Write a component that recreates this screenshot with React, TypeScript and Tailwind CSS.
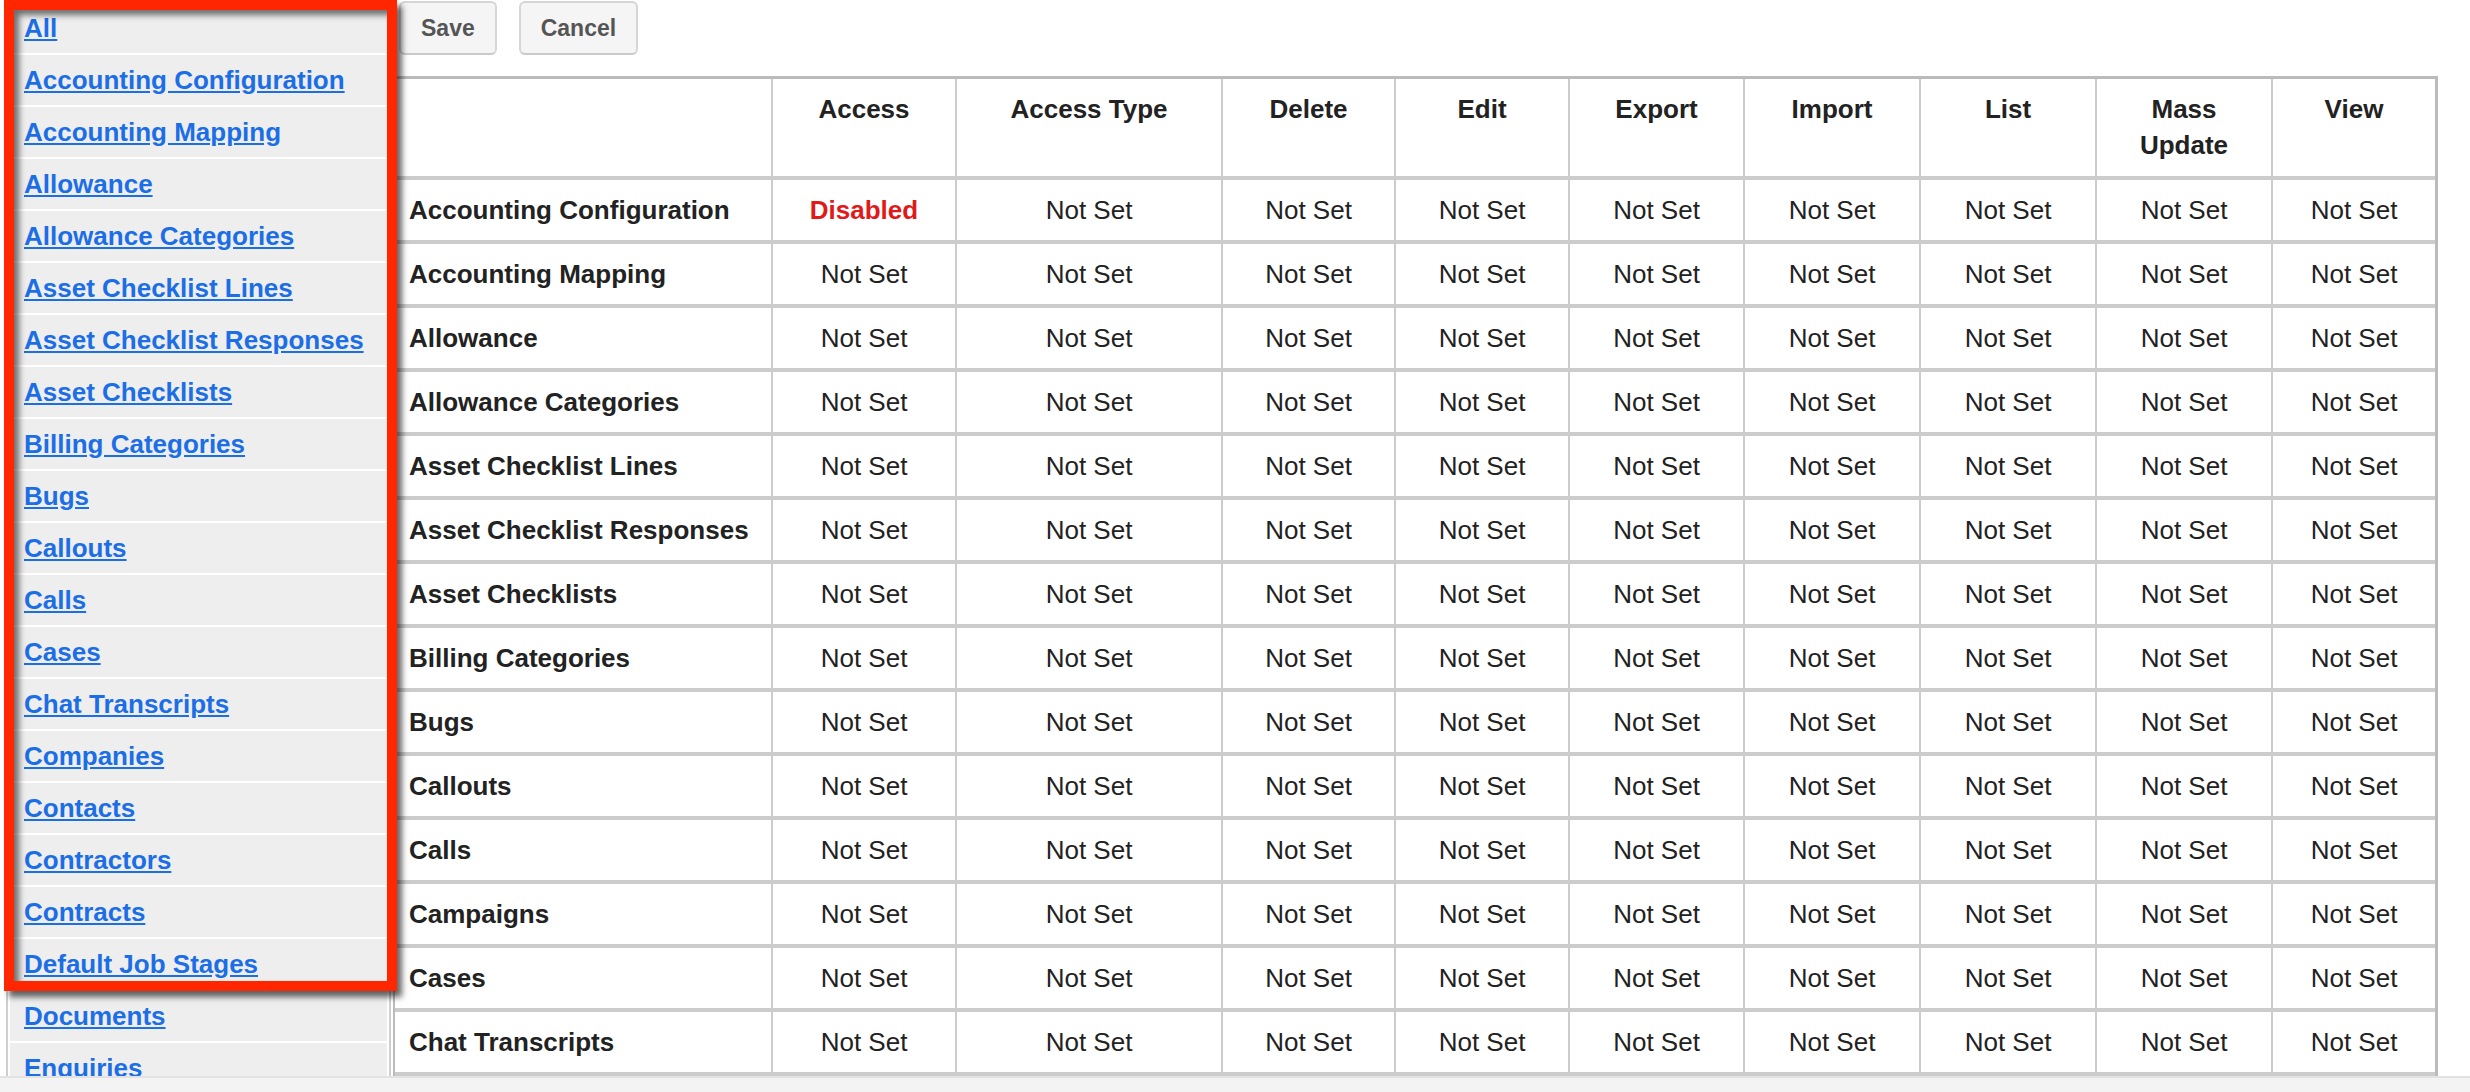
import React from "react";

const modules = [
  "All",
  "Accounting Configuration",
  "Accounting Mapping",
  "Allowance",
  "Allowance Categories",
  "Asset Checklist Lines",
  "Asset Checklist Responses",
  "Asset Checklists",
  "Billing Categories",
  "Bugs",
  "Callouts",
  "Calls",
  "Cases",
  "Chat Transcripts",
  "Companies",
  "Contacts",
  "Contractors",
  "Contracts",
  "Default Job Stages",
  "Documents",
  "Enquiries",
];

const rows = [
  "Accounting Configuration",
  "Accounting Mapping",
  "Allowance",
  "Allowance Categories",
  "Asset Checklist Lines",
  "Asset Checklist Responses",
  "Asset Checklists",
  "Billing Categories",
  "Bugs",
  "Callouts",
  "Calls",
  "Campaigns",
  "Cases",
  "Chat Transcripts",
];

// header label + column width in px
const columns: { label: string; width: string }[] = [
  { label: "Access", width: "w-[184px]" },
  { label: "Access Type", width: "w-[266px]" },
  { label: "Delete", width: "w-[173px]" },
  { label: "Edit", width: "w-[174px]" },
  { label: "Export", width: "w-[175px]" },
  { label: "Import", width: "w-[176px]" },
  { label: "List", width: "w-[176px]" },
  { label: "Mass Update", width: "w-[176px]" },
  { label: "View", width: "w-[164px]" },
];

const Sidebar = () => (
  <div className="ml-[6px] w-[385px] shrink-0 border-x-2 border-[#cfcfcf] bg-white px-[2px] pt-[3px]">
    {modules.map((name) => (
      <div key={name} className="mb-[2px] flex h-[50px] items-center bg-[#eeeeee] pl-[14px]">
        <a href="#" className="text-[26px] font-bold text-[#1c6ee6] underline">
          {name}
        </a>
      </div>
    ))}
  </div>
);

const Toolbar = () => (
  <div className="flex gap-[22px] pl-[6px] pt-[1px]">
    {["Save", "Cancel"].map((label) => (
      <button
        key={label}
        className="h-[54px] rounded-[6px] border-2 border-[#d6d6d6] border-b-[#cacaca] bg-[#f5f5f5] px-[20px] text-[23px] font-bold text-[#555555]"
      >
        {label}
      </button>
    ))}
  </div>
);

const RolesTable = () => (
  <table className="mt-[21px] w-[2040px] table-fixed border-separate border-spacing-0 border-l-2 border-r-[3px] border-t-[3px] border-[#bbbbbb] text-[#222222]">
    <colgroup>
      <col className="w-[376px]" />
      {columns.map((c) => (
        <col key={c.label} className={c.width} />
      ))}
    </colgroup>
    <thead>
      <tr>
        <th className="border-b-4 border-[#cccccc] p-0">
          <div className="h-[97px]" />
        </th>
        {columns.map((c) => (
          <th key={c.label} className="border-b-4 border-l-2 border-[#cccccc] p-0 align-top">
            <div className="h-[97px] px-[10px] pt-[12px] text-center text-[26px] font-bold leading-[36px]">
              {c.label === "Mass Update" ? (
                <>
                  Mass
                  <br />
                  Update
                </>
              ) : (
                c.label
              )}
            </div>
          </th>
        ))}
      </tr>
    </thead>
    <tbody>
      {rows.map((name, i) => (
        <tr key={name}>
          <td className="border-b-4 border-[#cccccc] p-0">
            <div className="flex h-[60px] items-center pl-[14px] text-[26px] font-bold whitespace-nowrap">{name}</div>
          </td>
          {columns.map((c, j) => (
            <td key={c.label} className="border-b-4 border-l-2 border-[#cccccc] p-0">
              {i === 0 && j === 0 ? (
                <div className="flex h-[60px] items-center justify-center text-[26px] font-bold text-[#e01a1a]">
                  Disabled
                </div>
              ) : (
                <div className="flex h-[60px] items-center justify-center text-[26px]">Not Set</div>
              )}
            </td>
          ))}
        </tr>
      ))}
    </tbody>
  </table>
);

export default function App() {
  return (
    <div className="relative flex h-[1092px] w-[2470px] flex-col overflow-hidden bg-white font-['Liberation_Sans',Arial,sans-serif]">
      <div className="flex h-[1076px] shrink-0 gap-[2px] overflow-hidden">
        <Sidebar />
        <div className="flex flex-1 flex-col">
          <Toolbar />
          <RolesTable />
        </div>
      </div>
      <div className="flex-1 border-t-2 border-[#e2e2e2] bg-[#f3f3f3]" />

      {/* annotation box drawn over the module list */}
      <div className="pointer-events-none absolute left-[4px] top-0 h-[991px] w-[393px] border-[10px] border-[#ff2600] shadow-[5px_6px_6px_rgba(0,0,0,0.6),inset_5px_5px_6px_rgba(0,0,0,0.55)]" />
    </div>
  );
}
